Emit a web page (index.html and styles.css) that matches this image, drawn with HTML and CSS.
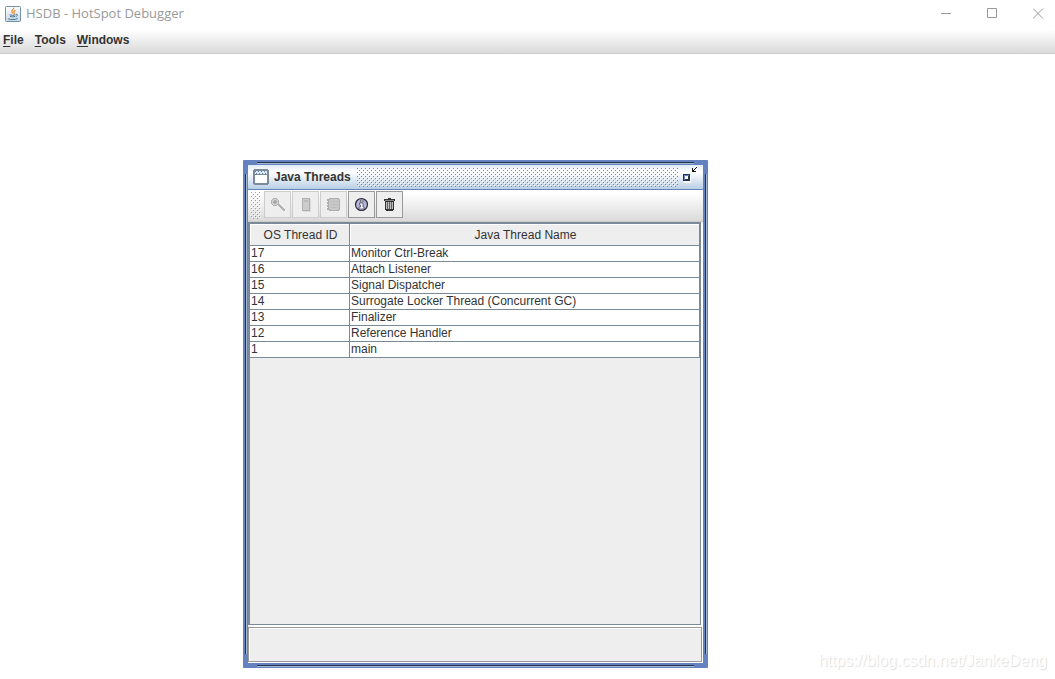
FILE: index.html
```
<!DOCTYPE html>
<html lang="en">

<head>
  <meta charset="utf-8">
  <meta name="viewport" content="width=device-width">
  <title>HSDB - HotSpot Debugger</title>
  <link rel="stylesheet" href="styles.css">
</head>

<body>
  <header class="titlebar">
    <svg class="app-icon" width="16" height="16" viewBox="0 0 16 16">
      <defs>
        <linearGradient id="tile" x1="0" y1="0" x2="0" y2="1">
          <stop offset="0" stop-color="#fdfdfd"/>
          <stop offset="1" stop-color="#c9d8e4"/>
        </linearGradient>
      </defs>
      <rect x=".5" y=".5" width="15" height="15" rx="1" fill="url(#tile)" stroke="#7393ab"/>
      <path d="M8.6 1.6c1 1.7-2.7 2.5-1.6 4.4.3.6.8 1 .8 1.6M10.4 4.2c-1.8.9-2 1.6-1.2 2.6.3.5 0 .9-.4 1.2" fill="none" stroke="#ed8b2e" stroke-width="1.2"/>
      <path d="M4.6 8.8c1.6.6 4.4.6 6 0M5 10.4c1.4.5 3.6.5 5 0M11 8.4c2-.4 1.8 1.6-.2 2.2M3.2 12.8c2.4 1 7 1 9.4-.3" fill="none" stroke="#41748f"/>
    </svg>
    <h1>HSDB - HotSpot Debugger</h1>
    <div class="window-buttons">
      <button type="button" aria-label="Minimize">
        <svg width="11" height="11"><path d="M0 5.5h10" /></svg>
      </button>
      <button type="button" aria-label="Maximize">
        <svg width="11" height="11"><path d="M.5.5h9v9h-9z" /></svg>
      </button>
      <button type="button" aria-label="Close">
        <svg width="11" height="11"><path d="M0 .5l10 10M10 .5l-10 10" /></svg>
      </button>
    </div>
  </header>

  <nav class="menubar">
    <button type="button"><u>F</u>ile</button>
    <button type="button"><u>T</u>ools</button>
    <button type="button"><u>W</u>indows</button>
  </nav>

  <main class="desktop">
    <section class="frame">
      <div class="frame-title">
        <svg class="frame-icon" width="16" height="16" viewBox="0 0 16 16" shape-rendering="crispEdges">
          <path d="M1 0h14v1h1v14h-1v1H1v-1H0V1h1z" fill="#7a8a99"/>
          <path d="M2 2h12v3H2z" fill="#dce8f4"/>
          <path d="M2 6h12v8H2z" fill="#fff"/>
          <path d="M2 2h1v1H2zM5 2h1v1H5zM8 2h1v1H8zM11 2h1v1h-1zM3 4h1v1H3zM6 4h1v1H6zM9 4h1v1H9zM12 4h1v1h-1z" fill="#6382bf"/>
        </svg>
        <h2>Java Threads</h2>
        <div class="bumps"></div>
        <button type="button" class="restore" aria-label="Restore">
          <svg width="16" height="16" viewBox="0 0 16 16" shape-rendering="crispEdges">
            <path d="M2 8h7v8H2z" fill="#fff"/>
            <path d="M1 7h7v7H1z" fill="#24344f"/>
            <path d="M2 8h5v5H2z" fill="#6382bf"/>
            <path d="M3 9h4v4H3z" fill="#24344f"/>
            <path d="M3 9h3v3H3z" fill="#fff"/>
            <path d="M10 1h1v2h1V2h1V1h1V0h1v1h-1v1h-1v1h-1v1h2v1h-4z" fill="#111"/>
          </svg>
        </button>
      </div>

      <div class="toolbar">
        <div class="grip"></div>
        <button type="button" disabled aria-label="Inspect">
          <svg width="16" height="16" viewBox="0 0 16 16" shape-rendering="crispEdges">
            <path d="M3 1h4v1h1v1h1v4H8v1H7v1H3V8H2V7H1V3h1V2h1z" fill="#b0b0b0"/>
            <path d="M3 2h4v1h1v4H7v1H3V7H2V3h1z" fill="#d0d0d0"/>
            <path d="M4 3h2v1h1v2H6v1H4V6H3V4h1z" fill="#aaa"/>
            <path d="M8 7h2v1h1v1h1v1h1v1h1v1h1v2h-2v-1h-1v-1h-1v-1h-1v-1H9V9H8z" fill="#b2b2b2"/>
          </svg>
        </button>
        <button type="button" disabled aria-label="Stack memory">
          <svg width="16" height="16" viewBox="0 0 16 16" shape-rendering="crispEdges">
            <path d="M5 2h8v13H5z" fill="#dadada"/>
            <path d="M4 1h8v13H4z" fill="#b0b0b0"/>
            <path d="M5 2h6v11H5z" fill="#ccc"/>
            <path d="M6 3h4v2H6z" fill="#bcbcbc"/>
          </svg>
        </button>
        <button type="button" disabled aria-label="Java stack trace">
          <svg width="16" height="16" viewBox="0 0 16 16" shape-rendering="crispEdges">
            <path d="M3 1h10v1h1v11h-1v1H3v-1H1v-2h1v-1H1V8h1V7H1V5h1V4H1V2h2z" fill="#adadad"/>
            <path d="M4 2h9v10h-1v1H4v-1H3V3h1z" fill="#c8c8c8"/>
            <path d="M5 4h7v1H5zM5 7h7v1H5zM5 10h7v1H5z" fill="#bebebe"/>
          </svg>
        </button>
        <button type="button" aria-label="Thread information">
          <svg width="16" height="16" viewBox="0 0 16 16">
            <circle cx="7.5" cy="7.5" r="6" fill="#b4b4d4" stroke="#292936" stroke-width="1.2"/>
            <path d="M6.5 3H9v2H6.500zM5.500 6H9v4h1v2H5v-2h1.500V8h-1z" fill="#f4f4ff" stroke="#555570" stroke-width=".8"/>
          </svg>
        </button>
        <button type="button" aria-label="Find crashes">
          <svg width="16" height="16" viewBox="0 0 16 16" shape-rendering="crispEdges">
            <path d="M6 1h3v1h4v2h-1v9h-1v1H4v-1H3V4H2V2h4z" fill="#333"/>
            <path d="M3 3h9v1H3z" fill="#888"/>
            <path d="M4 5h1v7H4zM6 5h1v7H6zM8 5h1v7H8zM10 5h1v7h-1z" fill="#bbb"/>
            <path d="M5 5h1v7H5zM7 5h1v7H7zM9 5h1v7H9z" fill="#666"/>
          </svg>
        </button>
      </div>

      <div class="scroll-pane">
        <table>
          <thead>
            <tr><th class="id-col" scope="col">OS Thread ID</th><th scope="col">Java Thread Name</th></tr>
          </thead>
          <tbody>
            <tr><td>17</td><td>Monitor Ctrl-Break</td></tr>
            <tr><td>16</td><td>Attach Listener</td></tr>
            <tr><td>15</td><td>Signal Dispatcher</td></tr>
            <tr><td>14</td><td>Surrogate Locker Thread (Concurrent GC)</td></tr>
            <tr><td>13</td><td>Finalizer</td></tr>
            <tr><td>12</td><td>Reference Handler</td></tr>
            <tr><td>1</td><td>main</td></tr>
          </tbody>
        </table>
      </div>

      <div class="status"></div>
    </section>

    <div class="watermark">https://blog.csdn.net/JankeDeng</div>
  </main>
</body>

</html>
```
FILE: styles.css
```
* {
  box-sizing: border-box;
}

body {
  margin: 0;
  min-height: 100vh;
  display: flex;
  flex-direction: column;
  background: #fff;
  color: #333;
  font-family: "Liberation Sans", Arial, sans-serif;
  font-size: 12px;
}

button {
  margin: 0;
  padding: 0;
  border: 0;
  background: none;
  color: inherit;
  font: inherit;
}

svg {
  display: block;
}

/* native window */
.titlebar {
  display: flex;
  align-items: center;
  height: 27px;
  padding-left: 5px;
}

.titlebar h1 {
  flex: 1;
  margin: 0 0 0 5px;
  padding-bottom: 2px;
  color: #999;
  font: 13px/16px "Open Sans", "Noto Sans", sans-serif;
}

.window-buttons {
  display: flex;
}

.window-buttons button {
  display: flex;
  justify-content: center;
  width: 45px;
  margin-right: 1px;
}

.window-buttons button:last-child {
  width: 44px;
  margin-right: -5px;
}

.window-buttons path {
  fill: none;
  stroke: #999;
}

.menubar {
  display: flex;
  gap: 11px;
  height: 27px;
  padding: 0 3px;
  border-bottom: 1px solid #ccc;
  background: linear-gradient(#fff, #fff 10%, #dadada);
}

.menubar button {
  height: 25px;
  font-weight: bold;
}

.menubar u {
  text-underline-offset: 2px;
}

.desktop {
  position: relative;
  flex: 1;
}

/* internal frame */
.frame {
  position: absolute;
  left: 243px;
  top: 106px;
  display: flex;
  flex-direction: column;
  width: 465px;
  height: 508px;
  border: 5px solid #6382bf;
  border-radius: 1px;
  background: #eee;
}

.frame::before,
.frame::after {
  content: "";
  position: absolute;
  pointer-events: none;
}

.frame::before {
  inset: -3px 9px;
  border: solid #24344f;
  border-width: 1px 0;
  box-shadow: inset 0 1px #a3b8cc, 0 1px #a3b8cc;
}

.frame::after {
  inset: 9px -3px;
  border: solid #24344f;
  border-width: 0 1px;
  box-shadow: inset 1px 0 #a3b8cc, 1px 0 #a3b8cc;
}

.frame-title {
  display: flex;
  align-items: center;
  height: 25px;
  padding: 0 5px;
  border-bottom: 1px solid #6382bf;
  background: linear-gradient(#e0eaf4, #fff 30%, #b8cfe5);
}

.frame-title h2 {
  margin: 0 6px 0 5px;
  font-size: 12px;
  line-height: 16px;
}

.bumps {
  flex: 1;
  height: 19px;
  background:
    conic-gradient(from 270deg at 1px 1px, #6382bf 25%, transparent 0) 0 0 / 4px 4px,
    conic-gradient(from 270deg at 1px 1px, #6382bf 25%, transparent 0) 2px 2px / 4px 4px,
    conic-gradient(from 270deg at 1px 1px, #fff 25%, transparent 0) 1px 1px / 4px 4px,
    conic-gradient(from 270deg at 1px 1px, #fff 25%, transparent 0) 3px 3px / 4px 4px;
}

.restore {
  align-self: flex-start;
  margin: 2px 0 0 4px;
}

.toolbar {
  display: flex;
  gap: 1px;
  height: 32px;
  padding: 1px 2px;
  border-bottom: 1px solid #ccc;
  background: linear-gradient(#fff, #fff 10%, #dadada);
}

.grip {
  width: 11px;
  height: 28px;
  margin-right: 2px;
  background:
    conic-gradient(from 270deg at 1px 1px, #999 25%, transparent 0) 1px 1px / 4px 4px,
    conic-gradient(from 270deg at 1px 1px, #999 25%, transparent 0) 3px 3px / 4px 4px,
    conic-gradient(from 270deg at 1px 1px, #fff 25%, transparent 0) 2px 2px / 4px 4px,
    conic-gradient(from 270deg at 1px 1px, #fff 25%, transparent 0) 0 0 / 4px 4px;
}

.toolbar button {
  display: grid;
  place-items: center;
  width: 27px;
  height: 27px;
  border: 1px solid #999;
  background: #eee;
}

.toolbar button:disabled {
  border-color: #ccc;
}

.scroll-pane {
  flex: 1;
  margin-right: 2px;
  border: solid #7a8a99;
  border-width: 2px 1px 1px 2px;
  margin-bottom: 2px;
  box-shadow: 1px 1px #fff, 2px 2px #fff;
}

table {
  width: 100%;
  border-spacing: 0;
  table-layout: fixed;
}

th,
td {
  padding: 0 1px;
  border: solid #7a8a99;
  border-width: 0 1px 1px 0;
}

th {
  height: 22px;
  padding-left: 3px;
  font-weight: normal;
  box-shadow: inset 1px 1px #fff;
}

.id-col {
  width: 100px;
}

td {
  height: 16px;
  background: #fff;
  line-height: 15px;
}

.status {
  height: 35px;
  margin-right: 1px;
  margin-bottom: 1px;
  border: 1px solid #999;
  box-shadow: inset 1px 1px #fff, 1px 1px #fff;
}

.watermark {
  position: absolute;
  right: 8px;
  bottom: 9px;
  color: #fff;
  font-size: 16px;
  line-height: 18px;
  text-shadow: 1px 1px 1px #ddd;
}
```
